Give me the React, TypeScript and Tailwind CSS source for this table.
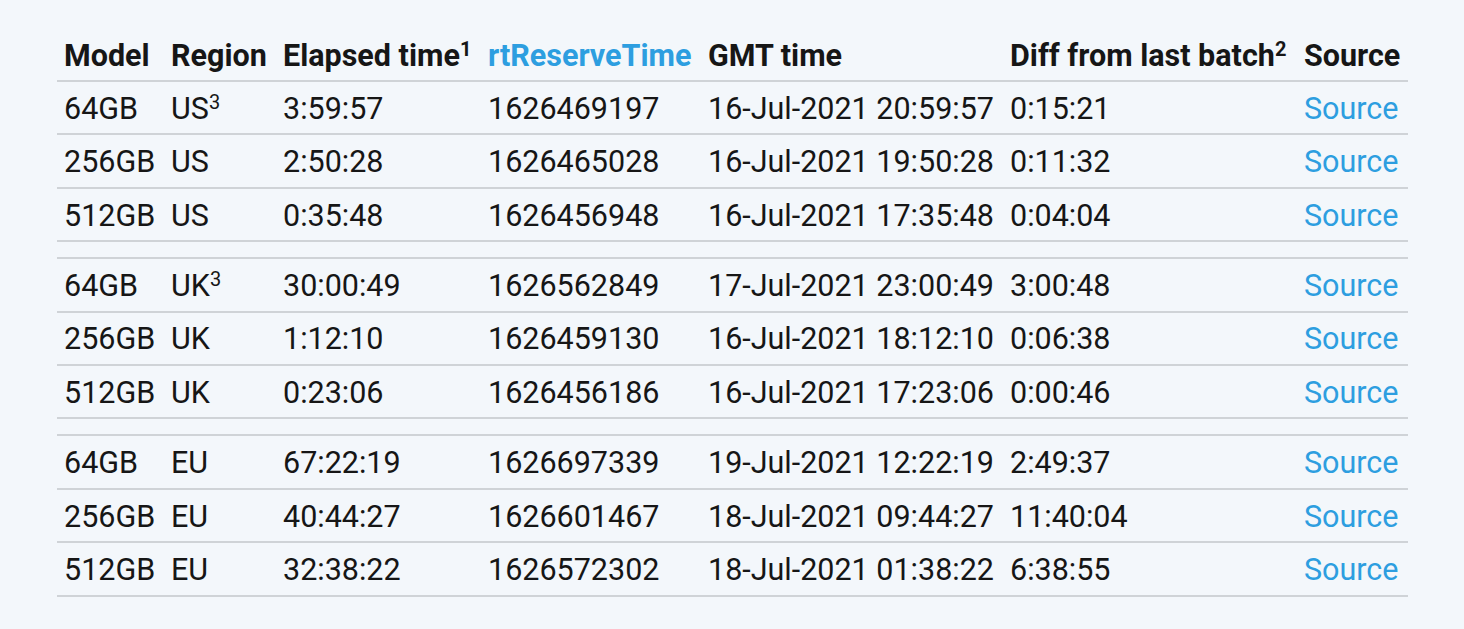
import React from 'react';

type Row = {
  model: string;
  region: string;
  note?: boolean;
  elapsed: string;
  reserve: string;
  gmt: string;
  diff: string;
};

const GROUPS: Row[][] = [
  [
    { model: '64GB', region: 'US', note: true, elapsed: '3:59:57', reserve: '1626469197', gmt: '16-Jul-2021 20:59:57', diff: '0:15:21' },
    { model: '256GB', region: 'US', elapsed: '2:50:28', reserve: '1626465028', gmt: '16-Jul-2021 19:50:28', diff: '0:11:32' },
    { model: '512GB', region: 'US', elapsed: '0:35:48', reserve: '1626456948', gmt: '16-Jul-2021 17:35:48', diff: '0:04:04' },
  ],
  [
    { model: '64GB', region: 'UK', note: true, elapsed: '30:00:49', reserve: '1626562849', gmt: '17-Jul-2021 23:00:49', diff: '3:00:48' },
    { model: '256GB', region: 'UK', elapsed: '1:12:10', reserve: '1626459130', gmt: '16-Jul-2021 18:12:10', diff: '0:06:38' },
    { model: '512GB', region: 'UK', elapsed: '0:23:06', reserve: '1626456186', gmt: '16-Jul-2021 17:23:06', diff: '0:00:46' },
  ],
  [
    { model: '64GB', region: 'EU', elapsed: '67:22:19', reserve: '1626697339', gmt: '19-Jul-2021 12:22:19', diff: '2:49:37' },
    { model: '256GB', region: 'EU', elapsed: '40:44:27', reserve: '1626601467', gmt: '18-Jul-2021 09:44:27', diff: '11:40:04' },
    { model: '512GB', region: 'EU', elapsed: '32:38:22', reserve: '1626572302', gmt: '18-Jul-2021 01:38:22', diff: '6:38:55' },
  ],
];

const cols = 'grid grid-cols-[107px_112px_205px_220px_302px_294px_111px]';
const rowCls = `${cols} h-[53.4px] pt-[3px] items-center border-b-2 border-[#cfd3d7]`;

export default function App() {
  return (
    <div className="min-h-screen bg-[#f3f7fb] pt-[28.6px] pl-[57px] text-[#161616] font-['Roboto',sans-serif] text-[30.5px] leading-none">
      <div className="w-[1351px]">
        {/* Header */}
        <div className={`${rowCls} font-bold`}>
          <div className="pl-[7px]">Model</div>
          <div className="pl-[7px]">Region</div>
          <div className="pl-[7px] whitespace-nowrap">
            Elapsed time<sup className="text-[20px]">1</sup>
          </div>
          <div className="pl-[7px] text-[#2d9ee0]">rtReserveTime</div>
          <div className="pl-[7px]">GMT time</div>
          <div className="pl-[7px] whitespace-nowrap">
            Diff from last batch<sup className="text-[20px]">2</sup>
          </div>
          <div className="pl-[7px]">Source</div>
        </div>

        {GROUPS.map((group, gi) => (
          <React.Fragment key={gi}>
            {gi > 0 && <div className="h-[17px] border-b-2 border-[#cfd3d7]"></div>}
            {group.map((r, i) => (
              <div key={i} className={rowCls}>
                <div className="pl-[7px]">{r.model}</div>
                <div className="pl-[7px]">
                  {r.region}
                  {r.note && <sup className="text-[20px]">3</sup>}
                </div>
                <div className="pl-[7px]">{r.elapsed}</div>
                <div className="pl-[7px]">{r.reserve}</div>
                <div className="pl-[7px] whitespace-nowrap">{r.gmt}</div>
                <div className="pl-[7px]">{r.diff}</div>
                <div className="pl-[7px]">
                  <a href="#" className="text-[#2d9ee0]">Source</a>
                </div>
              </div>
            ))}
          </React.Fragment>
        ))}
      </div>
    </div>
  );
}
